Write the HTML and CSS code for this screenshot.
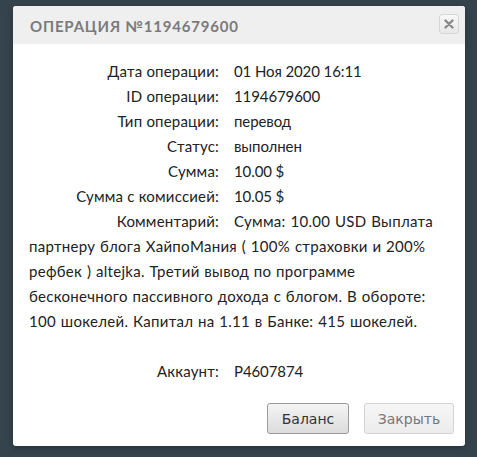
FILE: index.html
```html
<!DOCTYPE html>
<html lang="ru">
<head>
<meta charset="utf-8">
<link rel="stylesheet" href="styles.css">
</head>
<body>
<div class="dialog">
  <div class="head">
    <div class="title">Операция №1194679600</div>
    <button class="close" aria-label="close"><svg width="10" height="10" viewBox="0 0 10 10"><path d="M1.5 1.5 L8.5 8.5 M8.5 1.5 L1.5 8.5" stroke="#8a8a8a" stroke-width="2.4" stroke-linecap="round"/></svg></button>
  </div>
  <div class="body">
    <div class="row"><span class="lbl">Дата операции:</span><span class="val">01 Ноя 2020 16:11</span></div>
    <div class="row"><span class="lbl">ID операции:</span><span class="val">1194679600</span></div>
    <div class="row"><span class="lbl">Тип операции:</span><span class="val">перевод</span></div>
    <div class="row"><span class="lbl">Статус:</span><span class="val">выполнен</span></div>
    <div class="row"><span class="lbl">Сумма:</span><span class="val">10.00 $</span></div>
    <div class="row"><span class="lbl">Сумма с комиссией:</span><span class="val">10.05 $</span></div>
    <div class="row"><span class="lbl">Комментарий:</span><span class="comment">Сумма: 10.00 USD Выплата партнеру блога ХайпоМания ( 100% страховки и 200% рефбек ) altejka. Третий вывод по программе бесконечного пассивного дохода с блогом. В обороте: 100 шокелей. Капитал на 1.11 в Банке: 415 шокелей.</span></div>
    <div class="row spacer"></div>
    <div class="row"><span class="lbl">Аккаунт:</span><span class="val">P4607874</span></div>
  </div>
  <div class="foot">
    <button class="btn">Баланс</button>
    <button class="btn light">Закрыть</button>
  </div>
</div>
</body>
</html>
```
FILE: styles.css
```css
html, body {
  margin: 0;
  height: 100%;
}
body {
  background: #35444c;
  padding: 6px 12px 0 13px;
  box-sizing: border-box;
  font-family: Lato, "Noto Sans", sans-serif;
}
.dialog {
  width: 452px;
  background: #fff;
  border-radius: 3px;
  overflow: hidden;
  box-shadow: 0 2px 6px rgba(0,0,0,0.3);
}
.head {
  background: #efefef;
  height: 38px;
  display: flex;
  align-items: center;
  justify-content: space-between;
  padding: 0 6px 0 17px;
}
.title {
  text-transform: uppercase;
  font-weight: bold;
  font-size: 15px;
  letter-spacing: 0.8px;
  color: #7b7b7b;
  margin-top: 1px;
}
.close {
  width: 20px;
  height: 20px;
  padding: 0;
  border: 1px solid #d6d6d6;
  border-radius: 3px;
  background: linear-gradient(#f8f8f8, #e8e8e8);
  display: flex;
  align-items: center;
  justify-content: center;
  margin-top: -2px;
}
.body {
  padding: 15px 16px 0 16px;
  font-size: 15px;
  line-height: 25px;
  color: #222;
}
.row {
  min-height: 25px;
}
.lbl {
  display: inline-block;
  width: 190px;
  padding-right: 15px;
  text-align: right;
  box-sizing: content-box;
  color: #222;
  letter-spacing: 0.2px;
}
.val {
  letter-spacing: -0.1px;
}
.comment {
  letter-spacing: 0.3px;
  word-spacing: 0.6px;
}
.foot {
  display: flex;
  justify-content: flex-end;
  gap: 15px;
  padding: 19px 11px 12px 0;
}
.btn {
  box-sizing: border-box;
  width: 82px;
  height: 31px;
  padding: 0;
  font-family: "DejaVu Sans", sans-serif;
  font-size: 14px;
  color: #333;
  border: 1px solid #9a9a9a;
  border-radius: 3px;
  background: linear-gradient(#f4f4f4, #dcdcdc);
}
.btn.light {
  width: 90px;
  color: #777;
  border-color: #d4d4d4;
  background: linear-gradient(#f6f6f6, #ececec);
}
```
